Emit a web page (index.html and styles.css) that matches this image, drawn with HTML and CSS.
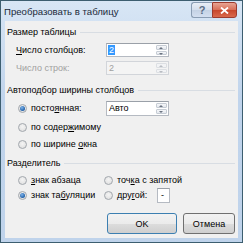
FILE: index.html
```html
<!DOCTYPE html>
<html lang="ru">
<head>
    <meta charset="UTF-8">
    <title>Преобразовать в таблицу</title>
    <link rel="stylesheet" href="styles.css">
</head>
<body>
    <div class="window">
        <div class="titlebar">
            <span class="title">Преобразовать в таблицу</span>
            <div class="caption-buttons">
                <div class="cap help">?</div>
                <div class="cap close">
                    <svg width="9" height="7" viewBox="0 0 9 7">
                        <path d="M1 0.5 L8 6.5 M8 0.5 L1 6.5" stroke="#fff" stroke-width="1.8"/>
                    </svg>
                </div>
            </div>
        </div>

        <div class="client">
            <div class="section-head row-1"><span>Размер таблицы</span><span class="rule"></span></div>

            <div class="field-row row-2">
                <label class="field-label"><u>Ч</u>исло столбцов:</label>
                <div class="spin">
                    <div class="spin-value"><span class="selected">2</span></div>
                    <div class="spin-btns"><span class="up"></span><span class="down"></span></div>
                </div>
            </div>

            <div class="field-row row-3 disabled">
                <label class="field-label">Число строк:</label>
                <div class="spin">
                    <div class="spin-value">2</div>
                    <div class="spin-btns"><span class="up"></span><span class="down"></span></div>
                </div>
            </div>

            <div class="section-head row-4"><span>Автоподбор ширины столбцов</span><span class="rule"></span></div>

            <div class="field-row row-5">
                <label class="radio-label"><span class="radio checked"></span><span>посто<u>я</u>нная:</span></label>
                <div class="spin tall">
                    <div class="spin-value">Авто</div>
                    <div class="spin-btns"><span class="up"></span><span class="down"></span></div>
                </div>
            </div>

            <div class="field-row row-6">
                <label class="radio-label wide"><span class="radio"></span><span>по содер<u>ж</u>имому</span></label>
            </div>

            <div class="field-row row-7">
                <label class="radio-label wide"><span class="radio"></span><span>по ширине <u>о</u>кна</span></label>
            </div>

            <div class="section-head row-8"><span>Разделитель</span><span class="rule"></span></div>

            <div class="field-row row-9">
                <label class="radio-label col-a"><span class="radio"></span><span><u>з</u>нак абзаца</span></label>
                <label class="radio-label wide"><span class="radio"></span><span>точ<u>к</u>а с запятой</span></label>
            </div>

            <div class="field-row row-10">
                <label class="radio-label col-a"><span class="radio checked"></span><span>знак та<u>б</u>уляции</span></label>
                <label class="radio-label col-b"><span class="radio"></span><span>дру<u>г</u>ой:</span></label>
                <div class="char-box">-</div>
            </div>

            <div class="button-row">
                <button class="btn default">OK</button>
                <button class="btn">Отмена</button>
            </div>
        </div>
    </div>
</body>
</html>
```

FILE: styles.css
```css
* {
    margin: 0;
    padding: 0;
    box-sizing: border-box;
}

body {
    background: #fff;
    font-family: 'Liberation Sans', Arial, sans-serif;
    font-size: 9px;
    color: #000;
}

u {
    text-decoration: underline;
    text-underline-offset: 1px;
}

.window {
    width: 243px;
    height: 243px;
    border: 1px solid #3d5e70;
    background: linear-gradient(#d8e6f5, #c0d4ec 40%, #bfd3eb);
    padding: 0 4px 4px;
    display: flex;
    flex-direction: column;
}

/* title bar */
.titlebar {
    height: 20px;
    display: flex;
    align-items: center;
    justify-content: space-between;
    margin-left: -1px;
}

.title {
    font-size: 9.6px;
    color: #1b2a3a;
    padding-top: 1px;
}

.caption-buttons {
    display: flex;
    align-self: flex-start;
    margin-top: 1px;
    margin-right: 1px;
}

.cap {
    height: 16px;
    border: 1px solid #8a9db3;
    display: flex;
    align-items: center;
    justify-content: center;
}

.help {
    width: 21px;
    border-radius: 3px 0 0 3px;
    border-right: none;
    background: linear-gradient(#e8eef6, #d3deec 50%, #c4d2e4 51%, #d3dff0);
    color: #5a6d84;
    font-size: 11px;
    font-weight: bold;
}

.close {
    width: 25px;
    border-color: #9d3b2e;
    border-radius: 0 3px 3px 0;
    background: linear-gradient(#e8a493, #d86d55 50%, #c7462b 51%, #d9694c);
}

/* client area */
.client {
    flex: 1;
    background: #f0f0f0;
    padding: 3px 3px 0 2px;
    display: flex;
    flex-direction: column;
}

.section-head {
    height: 16px;
    display: flex;
    align-items: center;
    gap: 4px;
}

.section-head .rule {
    flex: 1;
    height: 1px;
    background: #d8dde3;
    margin-top: 1px;
}

.field-row {
    display: flex;
    align-items: center;
    height: 18px;
    padding-left: 9px;
}

.field-label {
    width: 90px;
}

.disabled {
    color: #a0a0a0;
}

.row-2 { margin-top: 1px; }
.row-4 { margin-top: 5px; }
.row-5 { margin-top: 1px; }
.row-6 { margin-top: 1px; }
.row-7 { height: 16px; }
.row-8 { margin-top: 3px; }
.row-9 { margin-top: 2px; height: 14px; }
.row-10 { height: 16px; }

/* spin box */
.spin {
    width: 63px;
    height: 14px;
    border: 1px solid #b5bac2;
    border-top-color: #9aa0a8;
    background: #fff;
    display: flex;
    align-items: center;
    justify-content: space-between;
    padding: 1px 1px 1px 2px;
}

.spin.tall {
    height: 15px;
}

.disabled .spin {
    background: #f4f4f4;
    border-color: #d2d5da;
}

.selected {
    background: #3399ff;
    color: #fff;
    padding: 0 1px;
    margin-left: -1px;
}

.spin-btns {
    width: 11px;
    height: 100%;
    display: flex;
    flex-direction: column;
    gap: 1px;
}

.spin-btns span {
    flex: 1;
    border: 1px solid #c6ccd4;
    border-radius: 1px;
    background: linear-gradient(#f6f7f9, #e4e8ee);
    position: relative;
}

.spin-btns span::after {
    content: "";
    position: absolute;
    left: 2px;
    top: 1px;
    border-left: 2px solid transparent;
    border-right: 2px solid transparent;
}

.spin-btns .up::after {
    border-bottom: 2px solid #6a7380;
}

.spin-btns .down::after {
    border-top: 2px solid #6a7380;
}

.disabled .spin-btns span {
    border-color: #dcdfe3;
    background: #f2f3f5;
}

.disabled .spin-btns span::after {
    border-bottom-color: #b8bcc2;
    border-top-color: #b8bcc2;
}

/* radio buttons */
.radio-label {
    display: flex;
    align-items: center;
    gap: 4px;
    padding-left: 2px;
    width: 90px;
    white-space: nowrap;
}

.radio-label.wide {
    width: auto;
}

.radio-label.col-a {
    width: 86px;
}

.radio-label.col-b {
    width: 55px;
}

.radio {
    flex: none;
    width: 9px;
    height: 9px;
    border-radius: 50%;
    border: 1px solid #a2a7ad;
    background: radial-gradient(circle at 50% 40%, #f4f4f4, #dcdcdc);
    display: flex;
    align-items: center;
    justify-content: center;
}

.radio.checked::after {
    content: "";
    width: 5px;
    height: 5px;
    border-radius: 50%;
    background: radial-gradient(circle at 40% 35%, #7fb4ea, #1f5fa8 70%);
}

.char-box {
    width: 13px;
    height: 15px;
    border: 1px solid #b5bac2;
    border-top-color: #9aa0a8;
    background: #fff;
    display: flex;
    align-items: center;
    padding-left: 3px;
}

/* buttons */
.button-row {
    margin-top: 10px;
    display: flex;
    justify-content: flex-end;
    gap: 6px;
}

.btn {
    height: 21px;
    border: 1px solid #707070;
    border-radius: 3px;
    background: linear-gradient(#f2f2f2, #ebebeb 50%, #dddddd 51%, #cfcfcf);
    font-family: 'Liberation Sans', Arial, sans-serif;
    font-size: 9px;
    color: #000;
    width: 52px;
}

.btn.default {
    width: 70px;
    border-color: #3c7fb1;
}
```
